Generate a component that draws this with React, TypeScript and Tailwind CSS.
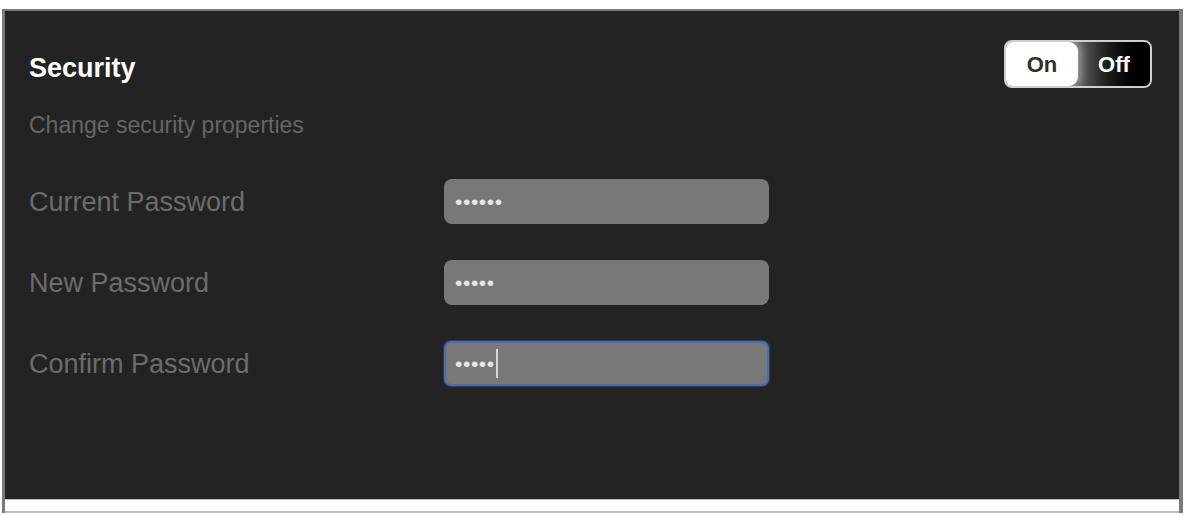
import React from "react";

const fields = [
  { label: "Current Password", value: "secret", focused: false },
  { label: "New Password", value: "abcde", focused: false },
  { label: "Confirm Password", value: "abcde", focused: true },
];

const App = () => {
  return (
    <div className="bg-white h-[515px] w-[1187px] pt-[9px] pl-[2px] pr-[4px] font-['Liberation_Sans',Arial,sans-serif]">
      <div className="border-t-2 border-l-[3px] border-r-[4px] border-[#7a7a7a] h-[504px] flex flex-col">
        {/* Panel */}
        <div className="bg-[#232323] h-[488px] pl-[24px] pr-[27px] pt-[29px]">
          {/* Header */}
          <div className="flex justify-between items-start">
            <h2 className="mt-[12px] text-[27px] leading-[32px] font-bold text-white">
              Security
            </h2>
            <div className="flex h-[48px] w-[148px] rounded-[8px] border-2 border-[#cfcfcf] bg-black overflow-hidden">
              <span className="w-[72px] flex items-center justify-center bg-white rounded-r-[9px] text-[22px] font-bold text-[#2e2e2e] z-10 shadow-[4px_0_8px_rgba(255,255,255,0.35)]">
                On
              </span>
              <span className="-ml-[9px] pl-[9px] w-[81px] flex items-center justify-center bg-gradient-to-r from-[#777] via-[#1a1a1a] to-black text-[22px] font-bold text-white">
                Off
              </span>
            </div>
          </div>

          <p className="mt-[23px] text-[23px] leading-[28px] text-[#666]">
            Change security properties
          </p>

          {/* Password form */}
          <form className="mt-[40px] flex flex-col gap-[36px]">
            {fields.map((f) => (
              <div key={f.label} className="flex items-center">
                <label className="w-[415px] text-[27px] leading-[32px] text-[#6c6c6c]">
                  {f.label}
                </label>
                <div className="relative">
                  <input
                    type="password"
                    readOnly
                    defaultValue={f.value}
                    className={
                      f.focused
                        ? "w-[325px] h-[45px] rounded-[7px] bg-[#787878] pl-[9px] text-[21px] tracking-[0.6px] text-[#e6e6e6] outline-none border-2 border-[#4d6cab] shadow-[0_0_0_1px_#2c3c5c]"
                        : "w-[325px] h-[45px] rounded-[8px] bg-[#787878] pl-[11px] text-[21px] tracking-[0.6px] text-[#e6e6e6] outline-none"
                    }
                  />
                  {f.focused && (
                    <span className="absolute left-[52px] top-[8px] h-[29px] w-[2px] bg-[#d8d8d8]" />
                  )}
                </div>
              </div>
            ))}
          </form>
        </div>

        {/* Footer strip */}
        <div className="h-[14px] bg-white border-t border-b-2 border-[#bdbdbd]" />
      </div>
    </div>
  );
};

export default App;
